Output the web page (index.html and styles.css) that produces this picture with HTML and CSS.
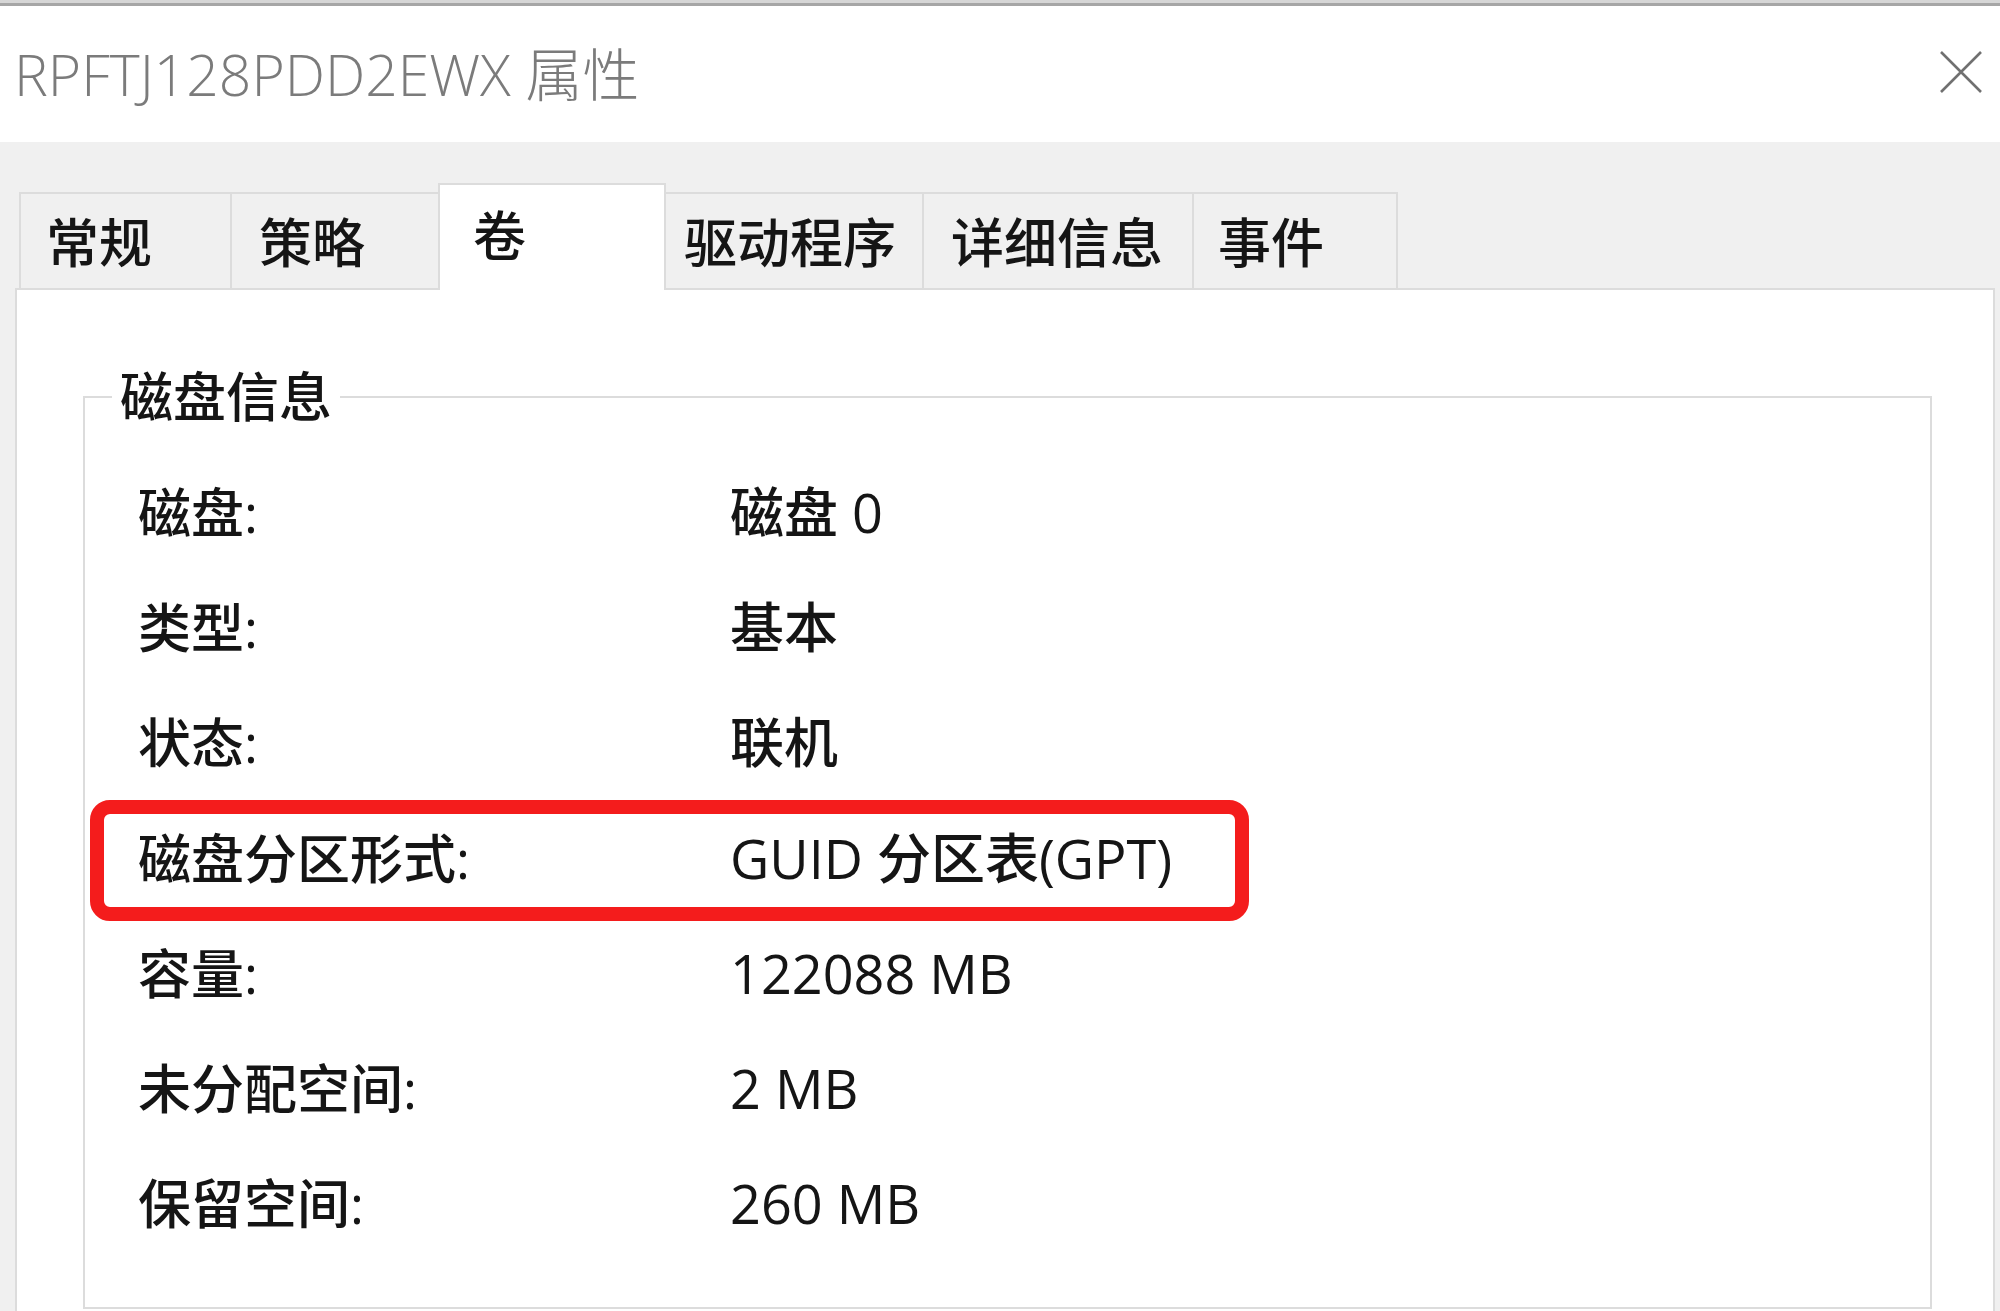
FILE: index.html
```html
<!DOCTYPE html>
<html lang="zh-CN">
<head>
  <meta charset="UTF-8">
  <title>RPFTJ128PDD2EWX 属性</title>
  <link rel="stylesheet" href="styles.css">
</head>
<body>
  <div class="window">
    <div class="titlebar">
      <span class="title">RPFTJ128PDD2EWX 属性</span>
      <svg class="close" width="44" height="44" viewBox="0 0 44 44">
        <path d="M2 2 L42 42 M42 2 L2 42" stroke="#707070" stroke-width="2.6" fill="none"/>
      </svg>
    </div>

    <div class="body">
      <div class="tabs">
        <div class="tab">常规</div>
        <div class="tab">策略</div>
        <div class="tab active">卷</div>
        <div class="tab">驱动程序</div>
        <div class="tab">详细信息</div>
        <div class="tab">事件</div>
      </div>

      <div class="panel">
        <fieldset class="group">
          <legend>磁盘信息</legend>
          <div class="rows">
            <div class="row"><span class="label">磁盘:</span><span class="value">磁盘 0</span></div>
            <div class="row"><span class="label">类型:</span><span class="value">基本</span></div>
            <div class="row"><span class="label">状态:</span><span class="value">联机</span></div>
            <div class="row marked">
              <span class="label">磁盘分区形式:</span><span class="value">GUID 分区表(GPT)</span>
              <div class="mark"></div>
            </div>
            <div class="row"><span class="label">容量:</span><span class="value">122088 MB</span></div>
            <div class="row"><span class="label">未分配空间:</span><span class="value">2 MB</span></div>
            <div class="row"><span class="label">保留空间:</span><span class="value">260 MB</span></div>
          </div>
        </fieldset>
      </div>
    </div>
  </div>
</body>
</html>
```

FILE: styles.css
```css
* { box-sizing: border-box; }

html, body {
  margin: 0;
  height: 1311px;
  overflow: hidden;
}

body {
  font-family: "Open Sans", "Noto Sans CJK SC", sans-serif;
  color: #151515;
  background: #f0f0f0;
}

.titlebar {
  height: 142px;
  background: #fff;
  border-top: 3px solid #d6d6d6;
  box-shadow: inset 0 3px 0 #a6a6a6;
  display: flex;
  align-items: center;
  justify-content: space-between;
  padding: 0 17px 0 14px;
}

.title {
  font-size: 57px;
  font-weight: 300;
  color: #7b7b7b;
  margin-top: -2px;
}

.close { margin-top: -2px; }

.body {
  background: #f0f0f0;
  padding: 41px 5px 0 15px;
}

.tabs {
  display: flex;
  align-items: flex-end;
  padding-left: 4px;
  font-size: 53px;
  font-weight: 500;
}

.tab {
  height: 96px;
  border-top: 2px solid #dcdcdc;
  border-left: 2px solid #dcdcdc;
  padding-left: 25px;
  display: flex;
  align-items: center;
  padding-bottom: 2px;
  white-space: nowrap;
}

.tab:nth-child(1) { width: 211px; }
.tab:nth-child(2) { width: 208px; padding-left: 27px; }
.tab:nth-child(4) { width: 256px; padding-left: 18px; border-left: none; }
.tab:nth-child(5) { width: 270px; padding-left: 27px; }
.tab:nth-child(6) { width: 206px; padding-left: 24px; border-right: 2px solid #dcdcdc; }

.tab.active {
  width: 228px;
  height: 107px;
  margin-bottom: -2px;
  background: #fff;
  border-right: 2px solid #dcdcdc;
  padding-left: 33px;
  align-items: flex-start;
  padding-top: 10px;
  position: relative;
  z-index: 1;
}

.panel {
  background: #fff;
  border: 2px solid #dcdcdc;
  border-bottom: none;
  height: 1023px;
  padding: 75px 61px 0 66px;
}

.group {
  margin: 0;
  padding: 0 0 46px 0;
  border: 2px solid #dcdcdc;
}

.group legend {
  font-size: 53px;
  font-weight: 500;
  line-height: 64px;
  margin-left: 27px;
  padding: 0 8px;
}

.rows {
  padding: 26px 0 0 53px;
}

.row {
  display: grid;
  grid-template-columns: 592px 1fr;
  height: 115.2px;
  line-height: 115px;
  font-size: 53px;
  font-weight: 500;
  position: relative;
}

.value { font-size: 54px; }

.mark {
  position: absolute;
  left: -48px;
  top: -1px;
  width: 1159px;
  height: 121px;
  border: 14px solid #f41c1c;
  border-radius: 20px;
}
```
